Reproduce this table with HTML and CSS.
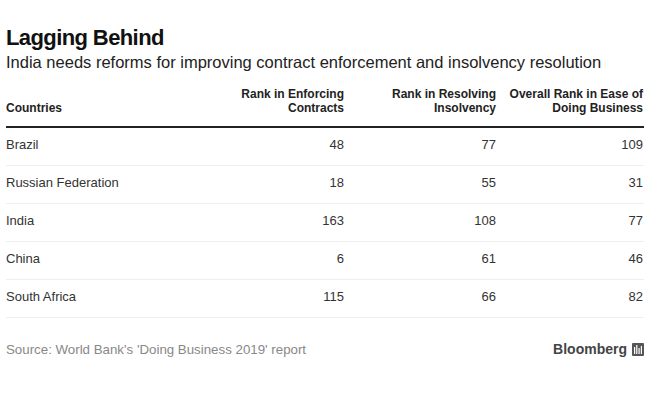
FILE: index.html
```html
<!DOCTYPE html>
<html>
<head>
<meta charset="utf-8">
<link rel="stylesheet" href="styles.css">
</head>
<body>
<div class="page">
  <h1 class="title">Lagging Behind</h1>
  <p class="subtitle">India needs reforms for improving contract enforcement and insolvency resolution</p>
  <div class="table">
    <div class="row head">
      <div class="cell name">Countries</div>
      <div class="cell num">Rank in Enforcing<br>Contracts</div>
      <div class="cell num">Rank in Resolving<br>Insolvency</div>
      <div class="cell num">Overall Rank in Ease of<br>Doing Business</div>
    </div>
    <div class="row"><div class="cell name">Brazil</div><div class="cell num">48</div><div class="cell num">77</div><div class="cell num">109</div></div>
    <div class="row"><div class="cell name">Russian Federation</div><div class="cell num">18</div><div class="cell num">55</div><div class="cell num">31</div></div>
    <div class="row"><div class="cell name">India</div><div class="cell num">163</div><div class="cell num">108</div><div class="cell num">77</div></div>
    <div class="row"><div class="cell name">China</div><div class="cell num">6</div><div class="cell num">61</div><div class="cell num">46</div></div>
    <div class="row"><div class="cell name">South Africa</div><div class="cell num">115</div><div class="cell num">66</div><div class="cell num">82</div></div>
  </div>
  <div class="footer">
    <span class="source">Source: World Bank's 'Doing Business 2019' report</span>
    <span class="brand">Bloomberg
      <svg class="logo" width="12" height="13" viewBox="0 0 12 13"><rect x="0" y="0" width="12" height="13" rx="1" fill="#555"/><rect x="2" y="4" width="1.2" height="7" fill="#fff"/><rect x="4.2" y="2" width="1.2" height="9" fill="#fff"/><rect x="6.5" y="5" width="1.2" height="6" fill="#fff"/><rect x="8.8" y="3" width="1.2" height="8" fill="#fff"/></svg>
    </span>
  </div>
</div>
</body>
</html>
```
FILE: styles.css
```css
html, body { margin: 0; padding: 0; background: #fff; }
body { font-family: "Liberation Sans", Arial, sans-serif; color: #111; }
.page { padding: 25px 6px 0 6px; width: 638px; }
.title { margin: 0; font-size: 22px; font-weight: bold; line-height: 26px; letter-spacing: -0.6px; color: #111; }
.subtitle { margin: 1px 0 0 0; font-size: 16.5px; line-height: 20px; color: #222; }
.table { margin-top: 15px; }
.row { display: grid; grid-template-columns: 190px 149px 152px 147px; align-items: center; height: 33px; padding-bottom: 4px; border-bottom: 1px solid #eee; }
.row.head { border-bottom: 2px solid #222; align-items: end; padding-bottom: 11px; height: auto; }
.cell { font-size: 13px; color: #333; }
.head .cell { font-size: 12px; font-weight: bold; line-height: 14px; color: #222; }
.num { text-align: right; padding-right: 1px; }
.footer { display: flex; justify-content: space-between; align-items: center; margin-top: 23px; }
.source { font-size: 13.3px; color: #888; }
.brand { font-size: 14px; font-weight: bold; color: #444; display: flex; align-items: center; gap: 5px; }
.logo { display: block; }
```
